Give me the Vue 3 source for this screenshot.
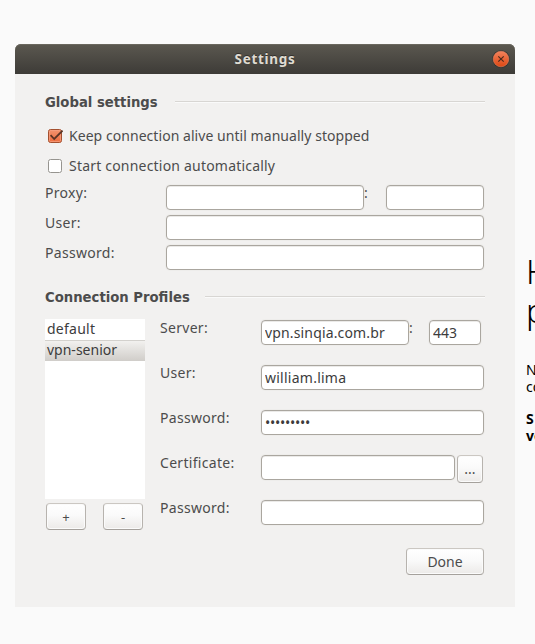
<script setup>
import { ref } from 'vue'

const keepAlive = ref(true)
const autoStart = ref(false)
const profiles = ['default', 'vpn-senior']
const selected = ref('vpn-senior')
const server = ref('vpn.sinqia.com.br')
const port = ref('443')
const user = ref('william.lima')
const password = ref('•••••••••')
</script>

<template>
  <div class="desktop">
    <section class="window">
      <header class="titlebar">
        <span class="title">Settings</span>
        <button class="close" aria-label="Close">
          <svg width="18" height="18" viewBox="0 0 18 18">
            <defs>
              <linearGradient id="closeFill" x1="0" y1="0" x2="0" y2="1">
                <stop offset="0" stop-color="#f4825c" />
                <stop offset="1" stop-color="#dd4814" />
              </linearGradient>
            </defs>
            <circle cx="9" cy="9" r="8.7" fill="#33312d" />
            <circle cx="9" cy="9" r="7.8" fill="url(#closeFill)" stroke="#f08b66" stroke-width="0.5" />
            <path d="M6.3 6.3 11.7 11.7M11.7 6.3 6.3 11.7" stroke="#4b2a1c" stroke-width="1.2" />
          </svg>
        </button>
      </header>

      <main class="content">
        <h2 class="heading"><span class="g1">Global settings</span><i></i></h2>

        <label class="check" @click="keepAlive = !keepAlive">
          <svg width="18" height="18" viewBox="0 0 18 18">
            <defs>
              <linearGradient id="boxFill" x1="0" y1="0" x2="0" y2="1">
                <stop offset="0" stop-color="#f29470" />
                <stop offset="1" stop-color="#ed6b3c" />
              </linearGradient>
            </defs>
            <template v-if="keepAlive">
              <rect x="3.5" y="2.5" width="13" height="13" rx="2" fill="url(#boxFill)" stroke="#a3502f" />
              <rect x="4.5" y="3.5" width="11" height="11" rx="1" fill="none" stroke="#f6a384" stroke-opacity=".7" />
              <path d="M5.6 8.2 9.2 12 17.6 3.6" fill="none" stroke="#5b3425" stroke-width="1.8" />
            </template>
          </svg>
          <span class="c1">Keep connection alive until manually stopped</span>
        </label>
        <label class="check" @click="autoStart = !autoStart">
          <svg width="18" height="18" viewBox="0 0 18 18">
            <rect x="3.5" y="2.5" width="13" height="13" rx="2" fill="#fff" stroke="#96948f" />
          </svg>
          <span class="c2">Start connection automatically</span>
        </label>

        <div class="global">
          <div class="row">
            <label>Proxy:</label><input class="host" /><b class="colon">:</b><input class="gport" />
          </div>
          <div class="row"><label>User:</label><input class="grow" /></div>
          <div class="row"><label>Password:</label><input class="grow" /></div>
        </div>

        <h2 class="heading second"><span class="g2">Connection Profiles</span><i></i></h2>

        <div class="profiles">
          <aside>
            <ul>
              <li v-for="p in profiles" :key="p" :class="{ on: p === selected }" @click="selected = p">{{ p }}</li>
            </ul>
            <div class="tools">
              <button class="btn">+</button>
              <button class="btn">-</button>
            </div>
          </aside>
          <div class="details">
            <div class="row">
              <label>Server:</label><input v-model="server" class="server" /><b class="colon">:</b><input v-model="port" class="port" />
            </div>
            <div class="row"><label>User:</label><input v-model="user" class="grow user" /></div>
            <div class="row"><label>Password:</label><input v-model="password" class="grow dots" /></div>
            <div class="row">
              <label>Certificate:</label><input class="grow" /><button class="btn browse">...</button>
            </div>
            <div class="row"><label>Password:</label><input class="grow" /></div>
          </div>
        </div>

        <footer><button class="btn done">Done</button></footer>
      </main>
    </section>

    <!-- page behind the dialog, cut off by the screen edge -->
    <article class="behind">
      <h1>H<br />p</h1>
      <p>N<br />co</p>
      <p class="strong">S<br />ve</p>
    </article>
  </div>
</template>

<style>
html,
body {
  background: #fafafa;
  overflow: hidden;
}
</style>

<style scoped>
.desktop {
  position: relative;
  width: 535px;
  height: 644px;
  box-sizing: border-box;
  padding: 44px 0 0 15px;
  overflow: hidden;
  background: #fafafa;
  font-family: 'Noto Sans', 'Open Sans', sans-serif;
  font-size: 14px;
  line-height: 20px;
  color: #4c4c4c;
}
.window {
  width: 500px;
  height: 563px;
  background: #f2f1f0;
  border-radius: 6px 6px 0 0;
}
.titlebar {
  display: flex;
  align-items: center;
  height: 30px;
  box-sizing: border-box;
  padding: 0 5px 0 23px;
  border-radius: 6px 6px 0 0;
  background: linear-gradient(#5b5850, #3d3b37);
  box-shadow: inset 0 1px #6a675e;
}
.title {
  flex: 1;
  text-align: center;
  font-size: 13.5px;
  font-weight: 700;
  letter-spacing: 0.7px;
  color: #dfdbd2;
  text-shadow: 0 -1px #33312d;
}
.close {
  width: 18px;
  height: 18px;
  padding: 0;
  border: 0;
  background: none;
}
.close svg {
  display: block;
}
.content {
  padding: 18px 30px 0;
}
.heading {
  display: flex;
  align-items: center;
  gap: 15px;
  height: 20px;
  margin: 0;
  font-family: 'DejaVu Sans Condensed', 'DejaVu Sans', sans-serif;
  font-stretch: condensed;
  font-size: 14.7px;
  line-height: 20px;
  font-weight: 700;
  white-space: nowrap;
}
.heading i {
  flex: 1;
  height: 1px;
  margin-top: -1px;
  background: #d8d6d3;
  box-shadow: 0 1px #fafafa;
}
.g1 {
  width: 115px;
}
.g2 {
  width: 145px;
}
.check {
  display: flex;
  align-items: center;
  gap: 6px;
  height: 30px;
}
.c1 {
  letter-spacing: 0.05px;
}
.c2 {
  letter-spacing: 0.2px;
}
.heading + .check {
  margin-top: 9px;
}
.row {
  display: flex;
  align-items: flex-start;
}
.row label {
  flex: none;
  letter-spacing: 0.3px;
  white-space: nowrap;
}
.global {
  display: grid;
  gap: 4px;
  padding-top: 4px;
}
.global .row {
  height: 26px;
}
.global label {
  width: 121px;
  line-height: 16px;
}
input {
  box-sizing: border-box;
  min-width: 0;
  height: 25px;
  margin: 0;
  padding: 0 3px;
  border: 1px solid #aaa69f;
  border-radius: 4px;
  background: #fff;
  box-shadow: inset 0 1px #ebeae8, 0 0 0 1px #eeedeb;
  font: inherit;
  color: #3c3c3c;
  outline: 0;
}
.host {
  width: 198px;
}
.colon {
  width: 22px;
  font-weight: 400;
  line-height: 16px;
}
.gport {
  width: 98px;
}
.grow {
  flex: 1;
  margin-right: 1px;
}
.second {
  margin-top: 16px;
}
.profiles {
  display: flex;
  gap: 15px;
  padding-top: 12px;
}
aside {
  flex: none;
  width: 100px;
}
ul {
  height: 180px;
  margin: 0;
  padding: 0;
  background: #fff;
  list-style: none;
  color: #3c3c3c;
}
li {
  height: 21px;
  padding-left: 2px;
  letter-spacing: 0.25px;
  line-height: 20px;
}
li.on {
  box-sizing: border-box;
  border-top: 1px solid #d3d1cd;
  background: linear-gradient(#f2f1ef, #d0cdc9);
  letter-spacing: 0;
  line-height: 18px;
}
.tools {
  display: flex;
  justify-content: space-between;
  padding: 4px 2px 0 1px;
}
.btn {
  box-sizing: border-box;
  width: 40px;
  height: 27px;
  padding: 0;
  border: 1px solid;
  border-color: #cbc7c2 #b7b3ae #a5a19c;
  border-radius: 4px;
  background: linear-gradient(#fff, #fafafa 45%, #eceae8);
  box-shadow: inset 0 0 0 1px #fbfbfb;
  font: inherit;
  color: #4c4c4c;
}
.tools .btn {
  font-size: 13px;
}
.details {
  flex: 1;
  min-width: 0;
  display: grid;
  grid-template-columns: minmax(0, 1fr);
  align-content: start;
  gap: 19px;
  padding-top: 1px;
}
.details .row {
  height: 26px;
}
.details label {
  width: 101px;
  line-height: 16px;
}
.details .colon {
  width: 20px;
  line-height: 16px;
}
.server {
  width: 148px;
  letter-spacing: 0.15px;
}
.user {
  letter-spacing: 0.25px;
}
.port {
  width: 52px;
}
.dots {
  letter-spacing: -0.25px;
}
.browse {
  flex: none;
  width: 26px;
  height: 28px;
  margin: 0 2px 0 1px;
}
footer {
  display: flex;
  justify-content: flex-end;
  padding: 18px 1px 0;
}
.done {
  width: 78px;
}
.behind {
  position: absolute;
  left: 526px;
  top: 252px;
  width: 60px;
  color: #000;
  font-size: 14px;
  line-height: 17px;
}
.behind h1 {
  margin: 0 0 31px;
  font-size: 33px;
  font-weight: 300;
  line-height: 39px;
}
.behind p {
  margin: 0 0 15px;
}
.behind .strong {
  font-weight: 700;
}
</style>
